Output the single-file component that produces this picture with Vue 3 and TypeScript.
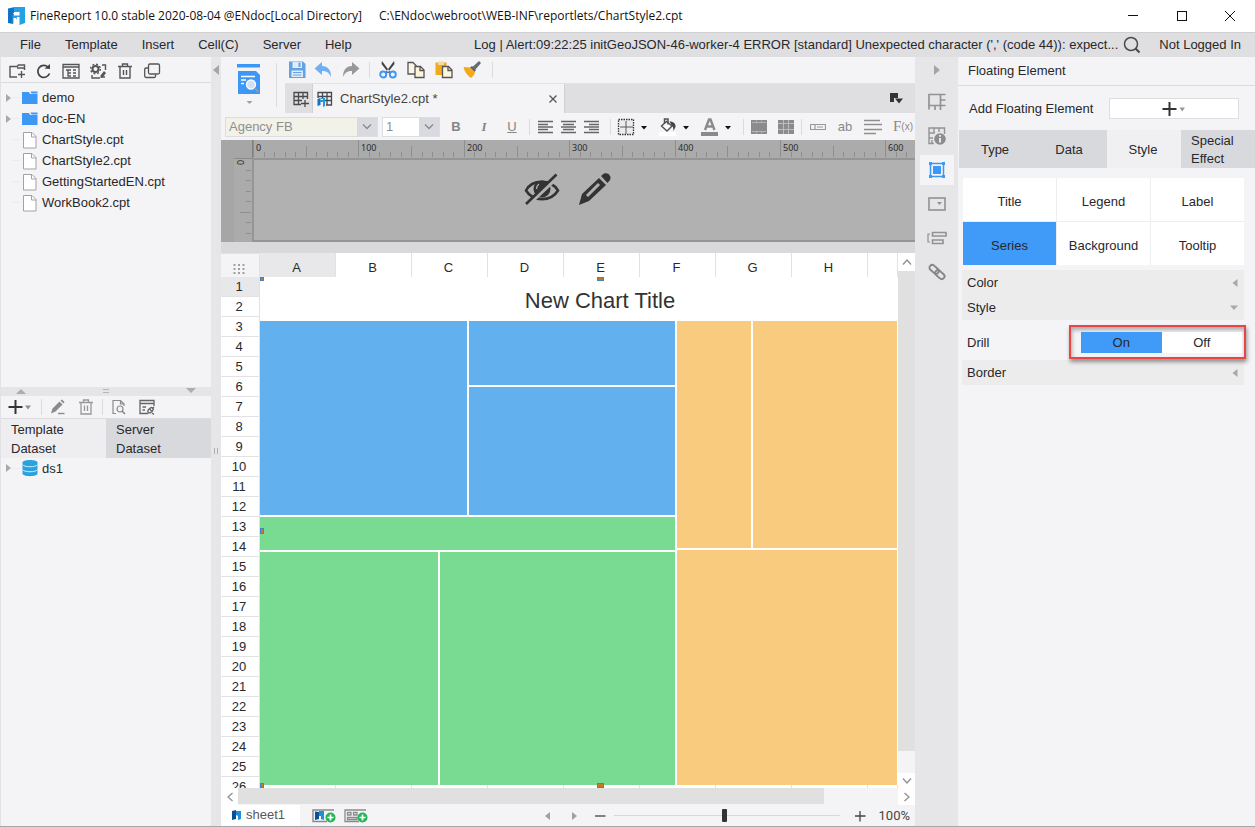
<script setup lang="ts">
import { computed, onBeforeUnmount, onMounted, ref } from 'vue'

const menus: string[] = ['File', 'Template', 'Insert', 'Cell(C)', 'Server', 'Help']

interface TreeEntry {
  name: string
  folder: boolean
}
const files: TreeEntry[] = [
  { name: 'demo', folder: true },
  { name: 'doc-EN', folder: true },
  { name: 'ChartStyle.cpt', folder: false },
  { name: 'ChartStyle2.cpt', folder: false },
  { name: 'GettingStartedEN.cpt', folder: false },
  { name: 'WorkBook2.cpt', folder: false },
]

const columns: string[] = ['A', 'B', 'C', 'D', 'E', 'F', 'G', 'H', '']
const rowCount = 26

const unit = 10.54
interface Tick {
  pos: number
  kind: 'major' | 'half' | 'minor'
  label: string
}

// The ruler only draws the ticks that fit its current width.
const canvas = ref<HTMLElement | null>(null)
const rulerWidth = ref<number>(0)
const measure = (): void => {
  rulerWidth.value = Math.max(0, (canvas.value?.clientWidth ?? 0) - 32)
}
onMounted(() => {
  measure()
  window.addEventListener('resize', measure)
})
onBeforeUnmount(() => window.removeEventListener('resize', measure))

const ticks = computed<Tick[]>(() =>
  Array.from({ length: Math.floor(rulerWidth.value / unit) + 1 }, (_, i) => {
    const pos = Math.round(i * unit)
    return {
      pos,
      kind: i % 10 === 0 ? 'major' : i % 5 === 0 ? 'half' : 'minor',
      label: i % 10 === 0 && pos + 24 < rulerWidth.value ? String(i * 10) : '',
    }
  }),
)
const tickTop = (t: Tick): number => (t.kind === 'major' ? 0 : t.kind === 'half' ? 6 : 12)
const sideTicks: number[] = [1, 2, 3, 4, 5, 6, 7]

const panelTabs: string[] = ['Type', 'Data', 'Style', 'Special Effect']
const panelTab = ref<string>('Style')
const parts: string[] = ['Title', 'Legend', 'Label', 'Series', 'Background', 'Tooltip']
const part = ref<string>('Series')
const drill = ref<'On' | 'Off'>('On')
const zoom = ref<number>(49)
</script>

<template>
  <div class="app">
    <header class="titlebar">
      <svg class="logo" width="18" height="18" viewBox="0 0 18 18" aria-hidden="true">
        <path d="M0 1.500L7 0V6H5V17L0 16Z" fill="#1272c4" />
        <path d="M6 0H17V16L11.500 18V10H9V12L4.500 17.500V8L6 6Z" fill="#22a2e4" />
        <path d="M6 5H11.500V8.500H6Z" fill="#fff" />
        <path d="M5.500 11H8.500V17.500H5.500Z" fill="#fff" />
      </svg>
      <h1>FineReport 10.0 stable 2020-08-04 @ENdoc[Local Directory]</h1>
      <span class="path">C:\ENdoc\webroot\WEB-INF\reportlets/ChartStyle2.cpt</span>
      <div class="window-buttons">
        <button type="button" aria-label="Minimize">
          <svg width="12" height="12" viewBox="0 0 12 12"><path d="M1 5.500H11" stroke="#111" /></svg>
        </button>
        <button type="button" aria-label="Maximize">
          <svg width="12" height="12" viewBox="0 0 12 12"><rect x="1.500" y="1.500" width="9" height="9" fill="none" stroke="#111" /></svg>
        </button>
        <button type="button" aria-label="Close">
          <svg width="12" height="12" viewBox="0 0 12 12"><path d="M1 1L11 11M11 1L1 11" stroke="#111" /></svg>
        </button>
      </div>
    </header>

    <nav class="menubar">
      <button v-for="m in menus" :key="m" type="button" class="menu">{{ m }}</button>
      <span class="log">Log | Alert:09:22:25 initGeoJSON-46-worker-4 ERROR [standard] Unexpected character (',' (code 44)): expect...</span>
      <button type="button" class="search" aria-label="Search">
        <svg width="18" height="18" viewBox="0 0 18 18"><circle cx="8" cy="8" r="6.500" fill="none" stroke="#4a4a4c" stroke-width="1.500" /><path d="M12.500 12.500L16.500 16.500" stroke="#4a4a4c" stroke-width="2.200" /></svg>
      </button>
      <button type="button" class="login">Not Logged In</button>
    </nav>

    <div class="body">
      <aside class="left">
        <div class="bar file-bar">
          <button type="button" aria-label="New folder">
            <svg width="18" height="18" viewBox="0 0 18 18" fill="none" stroke="#555558" stroke-width="1.400"><path d="M9 15H2V4.500H9L10.500 3H16.500V8M9 6H16.500M10 12.500H17M13.500 9V16" /></svg>
          </button>
          <button type="button" aria-label="Refresh">
            <svg width="18" height="18" viewBox="0 0 18 18" fill="none" stroke="#444447" stroke-width="1.700"><path d="M14.500 11.500A6 6 0 1 1 13 5" /><path d="M9.500 6.500L15 7V2Z" fill="#444447" stroke="none" /></svg>
          </button>
          <button type="button" aria-label="Show in folder">
            <svg width="18" height="18" viewBox="0 0 18 18" fill="none" stroke="#555558" stroke-width="1.300"><path d="M1 2.500H17V16H1ZM1 5H17" /><path d="M4 8H9M6 8V14H9M6 11H9M11 8H14M11 11H14M11 14H14" /></svg>
          </button>
          <button type="button" aria-label="Settings">
            <svg width="18" height="18" viewBox="0 0 18 18" fill="none" stroke="#555558"><circle cx="6.500" cy="7" r="3" stroke-width="2" /><circle cx="6.500" cy="7" r="4.800" stroke-width="1.500" stroke-dasharray="1.900 1.870" /><path d="M13 3H16.500V8M3 13V16H11M16 15H12" stroke-width="1.400" /><path d="M15 9L11.500 13.500V16L14 15L17 11Z" fill="#555558" stroke="none" /></svg>
          </button>
          <button type="button" aria-label="Delete file">
            <svg width="18" height="18" viewBox="0 0 18 18" fill="none" stroke="#555558" stroke-width="1.400"><path d="M2 4.500H16M6.500 4.500V2H11.500V4.500M4 5V16H14V5M7.500 8V13M10.500 8V13" /></svg>
          </button>
          <button type="button" aria-label="Copy file">
            <svg width="18" height="18" viewBox="0 0 18 18" fill="none" stroke="#555558" stroke-width="1.300"><rect x="5.500" y="2" width="11" height="10" rx="1.500" /><path d="M5 6H3A1.300 1.300 0 0 0 1.700 7.300V14A1.500 1.500 0 0 0 3.200 15.500H11A1.300 1.300 0 0 0 12.500 14V12.500" /></svg>
          </button>
        </div>
        <ul class="tree files">
          <li v-for="f in files" :key="f.name">
            <svg class="twist" width="6" height="8" viewBox="0 0 6 8" aria-hidden="true"><path v-if="f.folder" d="M0 0L5 4L0 8Z" fill="#a8a8aa" /></svg>
            <span class="stem" aria-hidden="true"></span>
            <svg v-if="f.folder" width="16" height="18" viewBox="0 0 16 18" aria-hidden="true"><path d="M0 3H7L8 5H15.500V15H0Z" fill="#3d97f7" /><path d="M8.500 2.500H15.500V4.500H9.500Z" fill="#3d97f7" /></svg>
            <svg v-else width="16" height="18" viewBox="0 0 16 18" aria-hidden="true"><path d="M1.500 1.500H10L14 5.500V17H1.500Z" fill="#fff" stroke="#a2a2a4" /><path d="M9.500 1.500V6H14" fill="none" stroke="#a2a2a4" /></svg>
            <span>{{ f.name }}</span>
          </li>
        </ul>
        <div class="hsplit" aria-hidden="true">
          <svg width="10" height="6" viewBox="0 0 10 6"><path d="M0 6L5 1L10 6Z" fill="#adadaf" /></svg>
          <svg width="6" height="6" viewBox="0 0 6 6"><path d="M0 1.500H6M0 4.500H6" stroke="#b5b5b7" /></svg>
          <svg width="10" height="6" viewBox="0 0 10 6"><path d="M0 0L5 5L10 0Z" fill="#adadaf" /></svg>
        </div>
        <div class="bar data-bar">
          <button type="button" class="wide" aria-label="Add dataset">
            <svg width="24" height="16" viewBox="0 0 24 16"><path d="M0.500 8H14.500M7.500 1V15" stroke="#333" stroke-width="2" /><path d="M17 6.500H23L20 10.500Z" fill="#8e8e90" /></svg>
          </button>
          <i class="sep"></i>
          <button type="button" aria-label="Edit dataset">
            <svg width="16" height="16" viewBox="0 0 16 16"><path d="M1 14.500L2.500 9.500L9.500 2.500L12.500 5.500L5.500 12.500ZM10.500 1.500L12 0.500L14.500 3L13.500 4.500Z" fill="#8a8a8c" /><path d="M8 14.500H14.500" stroke="#8a8a8c" stroke-width="1.400" /></svg>
          </button>
          <button type="button" aria-label="Delete dataset">
            <svg width="16" height="16" viewBox="0 0 16 16" fill="none" stroke="#98989a" stroke-width="1.300"><path d="M1 3.500H15M5.500 3V1H10.500V3M3 4V15H13V4M6.500 6.500V12M9.500 6.500V12" /></svg>
          </button>
          <i class="sep"></i>
          <button type="button" aria-label="Preview dataset">
            <svg width="16" height="16" viewBox="0 0 16 16" fill="none" stroke="#8a8a8c" stroke-width="1.200"><path d="M5 14.500H2V1.500H9.500L13 5V7M9.500 1.500V5H13" /><circle cx="9" cy="10" r="3" /><path d="M11 12L14 15" stroke-width="1.700" /></svg>
          </button>
          <button type="button" aria-label="Dataset connection">
            <svg width="16" height="16" viewBox="0 0 16 16" fill="none" stroke="#666668" stroke-width="1.300"><path d="M15 7V1.500H1V14.500H8M1 4.500H15M3.500 8H7M3.500 11H6" /><path d="M15 8L13 10M8 15L9.500 13.500" /><rect x="8.500" y="9.500" width="6" height="3.500" rx="1.500" transform="rotate(-45 11.500 11.200)" /><path d="M10 9.500L13.500 13" /><path d="M13 14L15 15.500" /></svg>
          </button>
        </div>
        <div class="data-tabs" role="tablist">
          <button type="button" role="tab" aria-selected="true">Template<br />Dataset</button>
          <button type="button" role="tab" aria-selected="false">Server<br />Dataset</button>
        </div>
        <ul class="tree datasets">
          <li>
            <svg class="twist" width="6" height="8" viewBox="0 0 6 8" aria-hidden="true"><path d="M0 0L5 4L0 8Z" fill="#a8a8aa" /></svg>
            <span class="stem" aria-hidden="true"></span>
            <svg width="16" height="18" viewBox="0 0 16 18" aria-hidden="true"><path d="M0.500 3.500C0.500 0 15.500 0 15.500 3.500V14.500C15.500 18 0.500 18 0.500 14.500Z" fill="#2aa2e0" /><path d="M0.500 5.500C2 8.500 14 8.500 15.500 5.500M0.500 10.500C2 13.500 14 13.500 15.500 10.500" fill="none" stroke="#d8eefa" /></svg>
            <span>ds1</span>
          </li>
        </ul>
      </aside>

      <div class="vsplit" aria-hidden="true">
        <svg width="6" height="10" viewBox="0 0 6 10"><path d="M6 0L0 5L6 10Z" fill="#a5a5a7" /></svg>
        <svg class="grip" width="4" height="6" viewBox="0 0 4 6"><path d="M0.500 0V6M3.500 0V6" stroke="#b0b0b2" /></svg>
      </div>

      <main class="center">
        <div class="top">
          <button type="button" class="preview" aria-label="Preview">
            <svg width="24" height="42" viewBox="0 0 24 42">
              <path d="M0 0H23V3.500H0Z" fill="#3d97f7" />
              <path d="M1 7H19L23 11V30H1Z" fill="#3d97f7" />
              <path d="M4 12.500H18M4 16H9M4 19.500H7" stroke="#fff" stroke-width="1.300" />
              <circle cx="14" cy="20.500" r="4.500" fill="#cfe2f5" stroke="#f8fbff" stroke-width="1.400" />
              <path d="M17.500 24L21.500 28" stroke="#8f9ba8" stroke-width="2.200" />
              <path d="M9.500 37H15.500L12.500 40Z" fill="#a0a0a2" />
            </svg>
          </button>
          <i class="tall-sep"></i>
          <div class="top-right">
            <div class="tools">
              <button type="button" aria-label="Save">
                <svg width="18" height="18" viewBox="0 0 18 18"><path d="M1 0.500H15L17.500 3V17H1Z" fill="#62a1e2" /><path d="M4.500 1H14V7H4.500Z" fill="#dfedfb" /><path d="M10.500 1.500H12.500V6H10.500Z" fill="#62a1e2" /><path d="M3.500 9.500H15V16H3.500Z" fill="#dfedfb" /><path d="M5 11.500H13.500M5 14H13.500" stroke="#62a1e2" /></svg>
              </button>
              <button type="button" aria-label="Undo">
                <svg width="18" height="18" viewBox="0 0 18 18"><path d="M0.500 7.500L8 1V5C14 5 17 9 17 16C15 11.500 12.500 10 8 10V14Z" fill="#6fb0f3" /></svg>
              </button>
              <button type="button" aria-label="Redo">
                <svg width="18" height="18" viewBox="0 0 18 18"><path d="M17.500 7.500L10 1V5C4 5 1 9 1 16C3 11.500 5.500 10 10 10V14Z" fill="#98989a" /></svg>
              </button>
              <i class="sep"></i>
              <button type="button" aria-label="Cut">
                <svg width="18" height="18" viewBox="0 0 18 18"><path d="M3 0L11.500 11.500L10 12.500L2.500 3ZM15 0L6.500 11.500L8 12.500L15.500 3Z" fill="#444447" /><circle cx="4.200" cy="13.500" r="3" fill="none" stroke="#3d97f7" stroke-width="1.900" /><circle cx="13.800" cy="13.500" r="3" fill="none" stroke="#3d97f7" stroke-width="1.900" /></svg>
              </button>
              <button type="button" aria-label="Copy">
                <svg width="18" height="18" viewBox="0 0 18 18" stroke="#555558" stroke-width="1.300"><path d="M1 1.500H6L9 4.500V13H1Z" fill="#fbf6e4" /><path d="M8 5.500H13.500L17 9V16.500H8Z" fill="#fdf6dc" /><path d="M13 5.500V9.500H17" fill="none" /></svg>
              </button>
              <button type="button" aria-label="Paste">
                <svg width="18" height="18" viewBox="0 0 18 18"><path d="M0.500 1.500H11.500V14H0.500Z" fill="#f2aa1a" /><path d="M3 0.500H9V4H3Z" fill="#f4d9a0" /><path d="M7.500 5.500H13.500L17 9V16.500H7.500Z" fill="#fdf6dc" stroke="#555558" stroke-width="1.300" /><path d="M13 5.500V9.500H17" fill="none" stroke="#555558" stroke-width="1.300" /></svg>
              </button>
              <button type="button" aria-label="Format painter">
                <svg width="18" height="18" viewBox="0 0 18 18"><path d="M16 0L18 2L12.500 8.500L9.500 6Z" fill="#666a72" /><path d="M9 5L13 9L11.500 11L7 6.500Z" fill="#5d6068" /><path d="M0.500 6L7 6.500L12 11.500C11 14 10 15.500 8 17C4.500 14.500 1.500 11 0.500 6Z" fill="#f2aa1a" /></svg>
              </button>
              <i class="sep last"></i>
            </div>
            <div class="doc-tabs">
              <button type="button" class="new-tab" aria-label="New template">
                <svg width="16" height="16" viewBox="0 0 16 16" fill="none" stroke="#4a4a4c" stroke-width="1.300"><path d="M8 13.500H1V1.500H14.500V8M1 5.500H14.500M1 9.500H9M5.500 1.500V13.500M10 1.500V8M8 12.500H16M12 9V16" /></svg>
              </button>
              <div class="doc-tab">
                <svg width="16" height="16" viewBox="0 0 16 16" fill="none" stroke="#4a4a4c" stroke-width="1.300"><path d="M1 7V1.500H14.500V14H9M1 5.500H14.500M8 9.500H14.500M5.500 1.500V7M10 1.500V14" /><path d="M0.500 8L3.500 7V14L0.500 15Z" fill="#1272c4" stroke="none" /><path d="M4 7H8V15L6 16V11H3V9H6V8H4Z" fill="#1f9be0" stroke="none" /></svg>
                <span>ChartStyle2.cpt *</span>
                <button type="button" aria-label="Close tab">
                  <svg width="8" height="8" viewBox="0 0 8 8"><path d="M0.500 0.500L7.500 7.500M7.500 0.500L0.500 7.500" stroke="#555" stroke-width="1.300" /></svg>
                </button>
              </div>
              <button type="button" class="tab-list" aria-label="Open templates">
                <svg width="13" height="11" viewBox="0 0 13 11"><path d="M0 0H8V5H4V9H0Z" fill="#333" /><path d="M5 5.500H13L9 10.500Z" fill="#333" /></svg>
              </button>
            </div>
          </div>
        </div>

        <div class="format">
          <label class="pick family">
            <select aria-label="Font family" disabled><option>Agency FB</option></select>
            <svg width="10" height="6" viewBox="0 0 10 6" aria-hidden="true"><path d="M1 0.500L5 4.500L9 0.500" fill="none" stroke="#88888a" stroke-width="1.300" /></svg>
          </label>
          <label class="pick size">
            <select aria-label="Font size" disabled><option>1</option></select>
            <svg width="10" height="6" viewBox="0 0 10 6" aria-hidden="true"><path d="M1 0.500L5 4.500L9 0.500" fill="none" stroke="#88888a" stroke-width="1.300" /></svg>
          </label>
          <button type="button" class="letter bold">B</button>
          <button type="button" class="letter italic">I</button>
          <button type="button" class="letter under">U</button>
          <i class="sep s1"></i>
          <button type="button" class="align" aria-label="Align left"><svg width="16" height="14" viewBox="0 0 16 14"><path d="M0 1.500H15M0 4.500H10M0 7H15M0 9.500H10M0 12.500H15" stroke="#656567" stroke-width="1.700" /></svg></button>
          <button type="button" class="align" aria-label="Align center"><svg width="16" height="14" viewBox="0 0 16 14"><path d="M0 1.500H15M2 4.500H13M0 7H15M2 9.500H13M0 12.500H15" stroke="#656567" stroke-width="1.700" /></svg></button>
          <button type="button" class="align" aria-label="Align right"><svg width="16" height="14" viewBox="0 0 16 14"><path d="M0 1.500H15M5 4.500H15M0 7H15M5 9.500H15M0 12.500H15" stroke="#656567" stroke-width="1.700" /></svg></button>
          <i class="sep s2"></i>
          <button type="button" class="drop" aria-label="Borders">
            <svg width="30" height="18" viewBox="0 0 30 18"><rect x="1.500" y="1.500" width="15" height="15" fill="#ececee" stroke="#333" stroke-width="1.300" stroke-dasharray="1.500 1" /><path d="M9 3V16M3 9H16" stroke="#58585a" /><path d="M24 8H30L27 11.500Z" fill="#111" /></svg>
          </button>
          <button type="button" class="drop" aria-label="Fill color">
            <svg width="30" height="18" viewBox="0 0 30 18"><path d="M0 14H17V18H0Z" fill="#fff" /><path d="M7.500 3.500L13 8L8 13L2.500 8Z" fill="#fafafa" stroke="#505053" stroke-width="1.400" /><path d="M5.500 5.500V1H9V6.500" fill="none" stroke="#505053" stroke-width="1.500" /><path d="M10.500 3.500C15 3.500 17 6 16.500 9L14.500 13C14.500 10 14 8.500 12.500 7Z" fill="#444447" /><path d="M24 8H30L27 11.500Z" fill="#111" /></svg>
          </button>
          <button type="button" class="drop" aria-label="Font color">
            <svg width="30" height="18" viewBox="0 0 30 18"><path d="M0 14H17V18H0Z" fill="#8a8a8c" /><path d="M4 12L8 1.500H9.500L13.500 12M5.500 8.500H12" fill="none" stroke="#8a8a8c" stroke-width="2.400" /><path d="M24 8H30L27 11.500Z" fill="#111" /></svg>
          </button>
          <i class="sep s3"></i>
          <button type="button" class="cell" aria-label="Merge cells">
            <svg width="16" height="14" viewBox="0 0 16 14"><path d="M0 0H16V14H0Z" fill="#8b8b8d" /><path d="M5.500 0.500V2.500M10.500 0.500V2.500M5.500 11.500V13.500M10.500 11.500V13.500M1 2.500H15M1 11.500H15" stroke="#b4b4b6" /></svg>
          </button>
          <button type="button" class="cell" aria-label="Unmerge cells">
            <svg width="16" height="14" viewBox="0 0 16 14"><path d="M0 0H16V14H0Z" fill="#8b8b8d" /><path d="M5.500 0V14M10.500 0V14M0 3.500H16M0 9.500H16" stroke="#bcbcbe" /></svg>
          </button>
          <i class="sep s4"></i>
          <button type="button" class="cell" aria-label="Widget"><svg width="16" height="14" viewBox="0 0 16 14"><path d="M0.500 4.500H15.500V9.500H0.500ZM5 4.500V9.500M7 7H13" fill="none" stroke="#98989a" stroke-width="1.200" /></svg></button>
          <button type="button" class="cell ab">ab</button>
          <button type="button" class="cell" aria-label="Rich text"><svg width="18" height="16" viewBox="0 0 18 16"><path d="M0 1.500H16M0 5.500H18M0 10.500H18M0 14.500H12" stroke="#8e8e90" stroke-width="1.500" /></svg></button>
          <button type="button" class="cell fx">F<small>(x)</small></button>
        </div>

        <section ref="canvas" class="canvas-top">
          <svg class="ruler-x" height="19" aria-hidden="true">
            <g v-for="t in ticks" :key="t.pos">
              <line :x1="t.pos + 0.5" :x2="t.pos + 0.5" :y1="tickTop(t)" y2="17" />
              <text v-if="t.label" :x="t.pos + 3" y="11">{{ t.label }}</text>
            </g>
          </svg>
          <svg class="ruler-y" width="18" height="84" aria-hidden="true">
            <text transform="translate(2 8) rotate(-90)" x="2" y="8">0</text>
            <line v-for="n in sideTicks" :key="n" :x1="n === 5 ? 6 : 12" x2="17" :y1="Math.round(n * 10.5) + 0.5" :y2="Math.round(n * 10.5) + 0.5" />
          </svg>
          <div class="banner">
            <button type="button" aria-label="Hide">
              <svg width="36" height="34" viewBox="0 0 36 34"><path d="M2 18.500C8 7 27 7 34 18.500C27 30 9 30 2 18.500Z" fill="none" stroke="#333" stroke-width="2.600" /><circle cx="18" cy="17" r="8.500" fill="#333" /><path d="M12.500 17A6 6 0 0 1 15 12" fill="none" stroke="#b1b1b1" stroke-width="1.300" /><path d="M3 33L34 4" stroke="#b1b1b1" stroke-width="5" /><path d="M2 32L32.500 2.500" stroke="#333" stroke-width="2.600" /></svg>
            </button>
            <button type="button" aria-label="Edit">
              <svg width="34" height="34" viewBox="0 0 34 34"><path d="M1 33L4 22L21 6L28 13L11 29Z" fill="#333" /><path d="M9 24L21 12" stroke="#b1b1b1" stroke-width="3" /><path d="M23 4L26 1.500C30 0 34 4 32 8L29.500 11Z" fill="#333" /></svg>
            </button>
          </div>
        </section>

        <section class="sheet-area">
          <div class="sheet">
            <table>
              <colgroup><col class="c-head" /><col v-for="(c, i) in columns" :key="i" :class="{ c: i < 8 }" /></colgroup>
              <thead>
                <tr>
                  <td class="corner"><svg width="12" height="10" viewBox="0 0 12 10" aria-hidden="true"><path d="M1.500 0V10M6 0V10M10.500 0V10" stroke="#a0a0a2" stroke-width="2" stroke-dasharray="2 2" /></svg></td>
                  <th v-for="(c, i) in columns" :key="i" scope="col" :class="{ current: i === 0 }">{{ c }}</th>
                </tr>
              </thead>
              <tbody>
                <tr v-for="r in rowCount" :key="r">
                  <th scope="row" :class="{ current: r === 1 }">{{ r }}</th>
                  <td v-for="(c, i) in columns" :key="i"></td>
                </tr>
              </tbody>
            </table>
            <figure class="chart">
              <figcaption>New Chart Title</figcaption>
              <div class="treemap">
                <div class="col main">
                  <div class="row r1">
                    <div class="tile blue"></div>
                    <div class="col">
                      <div class="tile blue small"></div>
                      <div class="tile blue large"></div>
                    </div>
                  </div>
                  <div class="tile green band"></div>
                  <div class="row r3">
                    <div class="tile green g1"></div>
                    <div class="tile green g2"></div>
                  </div>
                </div>
                <div class="col side">
                  <div class="row o1">
                    <div class="tile orange a"></div>
                    <div class="tile orange b"></div>
                  </div>
                  <div class="tile orange o2"></div>
                </div>
              </div>
              <i class="handle tl"></i><i class="handle tc"></i><i class="handle ml"></i><i class="handle bl"></i><i class="handle bc"></i>
            </figure>
          </div>
          <div class="vscroll" aria-hidden="true">
            <span class="arrow"><svg width="10" height="6" viewBox="0 0 10 6"><path d="M1 5.500L5 1L9 5.500" /></svg></span>
            <span class="thumb"></span>
            <span class="arrow end"><svg width="10" height="6" viewBox="0 0 10 6"><path d="M1 0.500L5 5L9 0.500" /></svg></span>
          </div>
        </section>
        <div class="hscroll" aria-hidden="true">
          <span class="arrow"><svg width="6" height="10" viewBox="0 0 6 10"><path d="M5.500 1L1 5L5.500 9" /></svg></span>
          <span class="thumb"></span>
          <span class="arrow end"><svg width="6" height="10" viewBox="0 0 6 10"><path d="M0.500 1L5 5L0.500 9" /></svg></span>
        </div>

        <footer class="sheet-tabs">
          <button type="button" class="sheet-tab">
            <svg width="9" height="10" viewBox="0 0 9 10" aria-hidden="true"><path d="M0 1L4 0V9L0 10Z" fill="#0d4f94" /><path d="M4 1H9V9L6 10V6L4 5Z" fill="#1f8fd6" /></svg>
            sheet1
          </button>
          <button type="button" class="add" aria-label="Add sheet">
            <svg width="24" height="14" viewBox="0 0 24 14"><path d="M22 1H1V12.500H15" fill="none" stroke="#8a8a8c" stroke-width="1.400" /><path d="M3 2.500L7 3V10L3 11Z" fill="#0d4f94" /><path d="M7 2H12V11L9 10V7H7Z" fill="#1f8fd6" /><circle cx="18.500" cy="8.500" r="5" fill="#22b455" /><path d="M15.500 8.500H21.500M18.500 5.500V11.500" stroke="#fff" stroke-width="1.700" /></svg>
          </button>
          <button type="button" class="add" aria-label="Add form">
            <svg width="24" height="14" viewBox="0 0 24 14"><path d="M22 1H1V12.500H15M3.500 3.500H7V6H3.500ZM9.500 3.500H13V6H9.500ZM3.500 8.500H13V10.500H3.500Z" fill="none" stroke="#8a8a8c" stroke-width="1.300" /><circle cx="18.500" cy="8.500" r="5" fill="#22b455" /><path d="M15.500 8.500H21.500M18.500 5.500V11.500" stroke="#fff" stroke-width="1.700" /></svg>
          </button>
          <div class="zoom">
            <button type="button" class="tri" aria-label="Previous sheet"><svg width="5" height="8" viewBox="0 0 5 8"><path d="M5 0L0 4L5 8Z" fill="#a0a0a2" /></svg></button>
            <button type="button" class="tri" aria-label="Next sheet"><svg width="5" height="8" viewBox="0 0 5 8"><path d="M0 0L5 4L0 8Z" fill="#a0a0a2" /></svg></button>
            <button type="button" aria-label="Zoom out"><svg width="12" height="12" viewBox="0 0 12 12"><path d="M1 6H11.500" stroke="#444" stroke-width="1.300" /></svg></button>
            <input v-model.number="zoom" type="range" min="0" max="100" aria-label="Zoom" />
            <button type="button" aria-label="Zoom in"><svg width="12" height="12" viewBox="0 0 12 12"><path d="M1 6H11.500M6 1V11.500" stroke="#444" stroke-width="1.300" /></svg></button>
            <span class="percent">100%</span>
          </div>
        </footer>
      </main>

      <nav class="strip">
        <button type="button" aria-label="Collapse"><svg width="6" height="10" viewBox="0 0 6 10"><path d="M0 0L6 5L0 10Z" fill="#a5a5a7" /></svg></button>
        <button type="button" aria-label="Cell element"><svg width="18" height="18" viewBox="0 0 18 18" fill="none" stroke="#929294" stroke-width="1.700"><path d="M1 16.500V1.500H17.500M1 12.500H17.500M12.500 1.500V17M7 12.500V17M12.500 7H17.500" /></svg></button>
        <button type="button" aria-label="Cell attribute"><svg width="18" height="18" viewBox="0 0 18 18" fill="none" stroke="#929294" stroke-width="1.400"><path d="M6 16.500H1V1H16.500V7M1 6H7M1 11H5M6 1V6M11 1V5M4 16V13" /><circle cx="12" cy="12" r="5.800" fill="#8c8c8e" stroke="none" /><path d="M12 8V9.800M12 11V15.500" stroke="#f0f0f0" stroke-width="1.800" /></svg></button>
        <button type="button" class="on" aria-label="Floating element"><svg width="18" height="18" viewBox="0 0 18 18"><path d="M1 2.500H17M1 15.500H17M2.500 1V17M15.500 1V17" stroke="#3d97f7" stroke-width="1.500" /><path d="M5 5H13V13H5Z" fill="#3d97f7" /><path d="M1 1H4V4H1ZM14 1H17V4H14ZM1 14H4V17H1ZM14 14H17V17H14Z" fill="#3d97f7" /></svg></button>
        <button type="button" aria-label="Widget settings"><svg width="18" height="18" viewBox="0 0 18 18"><rect x="1" y="3" width="16" height="12" fill="none" stroke="#929294" stroke-width="1.600" /><path d="M9 7H14L11.500 10Z" fill="#929294" /></svg></button>
        <button type="button" aria-label="Condition attribute"><svg width="20" height="18" viewBox="0 0 20 18" fill="none" stroke="#929294" stroke-width="1.600"><path d="M5.500 3.500H19V7H5.500ZM5.500 11H16V14.500H5.500Z" /><path d="M3 5H1V13H3" stroke-width="1.200" /></svg></button>
        <button type="button" aria-label="Hyperlink"><svg width="18" height="18" viewBox="0 0 18 18" fill="none" stroke="#858588" stroke-width="1.900"><rect x="1" y="3.500" width="10.500" height="5.500" rx="2.700" transform="rotate(42 6 6.200)" /><rect x="6.500" y="9" width="10.500" height="5.500" rx="2.700" transform="rotate(42 12 11.800)" /></svg></button>
      </nav>

      <aside class="right">
        <h2>Floating Element</h2>
        <div class="add-row">
          <span>Add Floating Element</span>
          <button type="button" aria-label="Add Floating Element"><svg width="24" height="14" viewBox="0 0 24 14"><path d="M0.500 7H14.500M7.500 0V14" stroke="#333" stroke-width="2" /><path d="M17.500 5.500H23L20.200 9.500Z" fill="#98989a" /></svg></button>
        </div>
        <div class="panel-tabs" role="tablist">
          <button v-for="t in panelTabs" :key="t" type="button" role="tab" :aria-selected="panelTab === t" @click="panelTab = t"><span>{{ t }}</span></button>
        </div>
        <div class="parts">
          <button v-for="p in parts" :key="p" type="button" :class="{ active: part === p }" @click="part = p">{{ p }}</button>
        </div>
        <div class="sections">
          <button type="button" class="fold">Color<svg width="6" height="8" viewBox="0 0 6 8" aria-hidden="true"><path d="M5.500 0L0.500 4L5.500 8Z" fill="#a8a8aa" /></svg></button>
          <button type="button" class="fold">Style<svg width="8" height="6" viewBox="0 0 8 6" aria-hidden="true"><path d="M0 0.500H8L4 5Z" fill="#a8a8aa" /></svg></button>
          <div class="drill" role="radiogroup" aria-labelledby="drill-label">
            <span id="drill-label">Drill</span>
            <div class="highlight">
              <label :class="{ active: drill === 'On' }"><input v-model="drill" type="radio" name="drill" value="On" />On</label>
              <label :class="{ active: drill === 'Off' }"><input v-model="drill" type="radio" name="drill" value="Off" />Off</label>
            </div>
          </div>
          <button type="button" class="fold">Border<svg width="6" height="8" viewBox="0 0 6 8" aria-hidden="true"><path d="M5.500 0L0.500 4L5.500 8Z" fill="#a8a8aa" /></svg></button>
        </div>
      </aside>
    </div>
  </div>
</template>

<style>
body {
  margin: 0;
}
</style>

<style scoped>
.app {
  display: flex;
  flex-direction: column;
  height: 100vh;
  box-sizing: border-box;
  overflow: hidden;
  border-bottom: 1px solid #a8a8aa;
  background: #f4f4f6;
  color: #28282c;
  font: 13px/19px "Liberation Sans", Arial, sans-serif;
}
button {
  display: flex;
  align-items: center;
  justify-content: center;
  flex: none;
  margin: 0;
  padding: 0;
  border: 0;
  background: none;
  color: inherit;
  font: inherit;
}
svg {
  display: block;
  flex: none;
}

.titlebar {
  display: flex;
  align-items: center;
  height: 32px;
  flex: none;
  padding-left: 8px;
  background: #fff;
  color: #111;
  font: 12px/16px "Open Sans", "Noto Sans", sans-serif;
}
.titlebar h1 {
  margin: 0 17px 0 4px;
  font: inherit;
  white-space: nowrap;
}
.path {
  white-space: nowrap;
}
.window-buttons {
  display: flex;
  margin-left: auto;
}
.window-buttons button {
  width: 49px;
  height: 32px;
}
.window-buttons button:last-child {
  padding-right: 2px;
}

.menubar {
  display: flex;
  align-items: center;
  height: 25px;
  flex: none;
  box-sizing: border-box;
  border-top: 1px solid #cfcfd1;
  padding: 0 14px 1px 8px;
  background: #dfdfe1;
}
.menu {
  padding: 0 12px;
}
.log {
  flex: 1;
  min-width: 0;
  overflow: hidden;
  text-align: right;
  white-space: nowrap;
}
.search {
  margin: 0 18px 0 5px;
}

.body {
  display: flex;
  flex: 1;
  min-height: 0;
}
.left {
  display: flex;
  flex-direction: column;
  width: 211px;
  flex: none;
  box-sizing: border-box;
  border-left: 1px solid #e2e2e4;
}
.bar {
  display: flex;
  align-items: center;
  flex: none;
  box-sizing: border-box;
  border-bottom: 1px solid #dcdcde;
}
.file-bar {
  height: 26px;
  padding: 3px 0 0 2px;
}
.file-bar button {
  width: 27px;
}
.tree {
  margin: 0;
  padding: 0;
  list-style: none;
}
.tree li {
  display: flex;
  align-items: center;
  height: 21px;
}
.twist {
  margin-left: 5px;
}
.stem {
  width: 8px;
  height: 1px;
  margin-right: 2px;
  background: #ececee;
}
.tree li > span:last-child {
  margin-left: 4px;
}
.files {
  flex: 300;
  min-height: 0;
  box-sizing: border-box;
  padding-top: 4px;
}
.datasets {
  flex: 369;
  min-height: 0;
}
.hsplit {
  display: flex;
  align-items: center;
  justify-content: space-between;
  height: 9px;
  flex: none;
  padding: 0 15px;
  background: #e5e5e7;
}
.data-bar {
  height: 23px;
}
.data-bar .wide {
  width: 38px;
}
.data-bar button {
  width: 28px;
}
.sep {
  width: 1px;
  height: 16px;
  flex: none;
  background: #dbdbdd;
}
.data-bar .sep {
  margin: 0 2px;
}
.data-tabs {
  display: flex;
  flex: none;
}
.data-tabs button {
  flex: 1;
  justify-content: flex-start;
  padding: 1px 10px 0;
  background: #d8d9dd;
  text-align: left;
}
.data-tabs button[aria-selected="true"] {
  background: #eeeef0;
}

.vsplit {
  display: flex;
  flex-direction: column;
  align-items: center;
  width: 10px;
  flex: none;
  box-sizing: border-box;
  padding-top: 8px;
  background: #e6e6e8;
}
.grip {
  margin: auto 0;
}

.center {
  display: flex;
  flex-direction: column;
  flex: 1;
  min-width: 0;
  box-sizing: border-box;
}
.top {
  display: flex;
  height: 56px;
  flex: none;
}
.preview {
  width: 55px;
}
.tall-sep {
  width: 1px;
  margin: 6px 8px 6px 0;
  flex: none;
  background: #dbdbdd;
}
.top-right {
  flex: 1;
  min-width: 0;
}
.tools {
  display: flex;
  align-items: center;
  height: 26px;
}
.tools button {
  width: 28px;
}
.tools button:first-child {
  width: 24px;
}
.tools .sep {
  margin: 0 4px;
}
.tools .last {
  margin-left: 6px;
}
.doc-tabs {
  display: flex;
  height: 29px;
  border-top: 1px solid #e2e2e4;
  background: #dfdfe1;
}
.new-tab {
  width: 28px;
  padding-left: 4px;
  box-sizing: border-box;
  border-right: 1px solid #d0d0d2;
}
.doc-tab {
  display: flex;
  align-items: center;
  width: 252px;
  box-sizing: border-box;
  padding: 0 7px 0 4px;
  border-right: 1px solid #d0d0d2;
  background: #f4f4f6;
  color: #444;
}
.doc-tab span {
  margin: 0 auto 0 7px;
}
.tab-list {
  margin: 0 12px 0 auto;
}

.format {
  display: flex;
  align-items: center;
  height: 27px;
  flex: none;
  box-sizing: border-box;
  padding-left: 4px;
  overflow: hidden;
}
.pick {
  display: flex;
  align-items: center;
  justify-content: flex-end;
  position: relative;
  height: 20px;
  box-sizing: border-box;
  flex: none;
  border: 1px solid #dcdde1;
  background: #d9dadf;
}
.pick svg {
  margin: 0 5px;
}
.pick select {
  flex: 1;
  min-width: 0;
  height: 18px;
  margin: 0;
  padding: 0 3px;
  appearance: none;
  border: 0;
  border-radius: 0;
  background: #fff;
  color: #8f8f91;
  opacity: 1;
  font: 13px/18px "Liberation Sans", Arial, sans-serif;
}
.family {
  width: 153px;
  margin-right: 4px;
}
.family select {
  background: #f2f2e8;
}
.size {
  width: 58px;
  margin-right: 2px;
}
.letter {
  width: 28px;
  color: #858587;
}
.bold {
  font-weight: 700;
}
.italic {
  font: italic 700 13px/19px "Liberation Serif", serif;
}
.under {
  text-decoration: underline;
}
.align {
  width: 23px;
}
.s1 {
  margin: 0 4px 0 3px;
}
.s2 {
  margin: 0 6px 0 7px;
}
.drop {
  margin-right: 12px;
}
.s3 {
  margin: 0 7px 0 0;
}
.cell {
  margin-right: 11px;
  color: #88888a;
}
.s4 {
  margin: 0 8px 0 -4px;
}
.ab {
  width: 16px;
}
.fx {
  margin: 0;
  font: 15px/19px "Liberation Serif", serif;
}
.fx small {
  font: 10px/19px "Liberation Sans", Arial, sans-serif;
}

.canvas-top {
  display: grid;
  grid-template-columns: 31px minmax(0, 1fr);
  grid-template-rows: 18px 84px;
  flex: none;
  overflow: hidden;
  background: #a6a6a6;
}
.ruler-x {
  grid-column: 2;
  width: 100%;
  border-left: 1px solid #808080;
  box-sizing: border-box;
  background: #ababab;
}
.ruler-y {
  grid-column: 1;
  justify-self: end;
  background: #ababab;
  border-top: 1px solid #8c8c8c;
  box-sizing: border-box;
}
.canvas-top line {
  stroke: #8e8e8e;
}
.canvas-top text {
  fill: #2c2c2c;
  font: 9px "Noto Sans", sans-serif;
}
.banner {
  display: flex;
  justify-content: center;
  gap: 18px;
  box-sizing: border-box;
  padding: 12px 34px 0 0;
  border: 2px solid #959595;
  border-right: 0;
  background: #b1b1b1;
}
.banner button {
  height: 34px;
}

.sheet-area {
  display: flex;
  flex: 1;
  min-height: 0;
  border-top: 11px solid #d9d9db;
}
.sheet {
  position: relative;
  flex: 1;
  min-width: 0;
  overflow: hidden;
  background: #fff;
}
table {
  width: 100%;
  border-collapse: separate;
  border-spacing: 0;
  table-layout: fixed;
}
.c-head {
  width: 39px;
}
.c {
  width: 76px;
}
th,
td {
  box-sizing: border-box;
  height: 20px;
  padding: 0;
  border: solid #e2e2e4;
  border-width: 0 1px 1px 0;
  font-weight: 400;
  line-height: 19px;
  text-align: center;
}
thead th,
thead td {
  height: 24px;
  padding: 4px 2px 0 0;
  border-bottom: 0;
}
tbody th {
  padding: 0 2px 0 0;
  line-height: 18px;
}
.current {
  background: #e8e8ea;
}
.corner {
  background: #f4f4f6;
  border-top: 1px solid #e2e2e4;
}
.corner svg {
  margin: 2px auto 0;
}
.chart {
  position: absolute;
  display: flex;
  flex-direction: column;
  inset: 24px 0 3px 39px;
  margin: 0;
  background: #fff;
}
.chart figcaption {
  height: 44px;
  padding-left: 42px;
  box-sizing: border-box;
  flex: none;
  color: #333;
  font-size: 22px;
  line-height: 48px;
  text-align: center;
}
.treemap {
  display: flex;
  gap: 2px;
  flex: 1;
  min-height: 0;
  padding-right: 1px;
}
.col,
.row {
  display: flex;
  gap: 2px;
  flex: 1 1 0;
  min-width: 0;
  min-height: 0;
}
.col {
  flex-direction: column;
}
.tile {
  flex: 1 1 0;
}
.blue {
  background: #62b0ed;
}
.green {
  background: #78db91;
}
.orange {
  background: #f8cb7f;
}
.main {
  flex-grow: 416;
}
.side {
  flex-grow: 220;
}
.r1 {
  flex-grow: 194;
}
.band {
  flex-grow: 33;
}
.r3 {
  flex-grow: 233;
}
.small {
  flex-grow: 64;
}
.large {
  flex-grow: 128;
}
.g1 {
  flex-grow: 178;
}
.g2 {
  flex-grow: 236;
}
.o1 {
  flex-grow: 227;
}
.o2 {
  flex-grow: 236;
}
.a {
  flex-grow: 74;
}
.b {
  flex-grow: 145;
}
.handle {
  position: absolute;
  width: 4px;
  height: 4px;
  box-sizing: border-box;
  border: 1px solid #3f86c8;
  background: #c8791e;
}
.tl {
  top: 0;
  left: 0;
}
.tc {
  top: 0;
  left: 337px;
  width: 7px;
}
.ml {
  top: 251px;
  left: 0;
  height: 6px;
}
.bl {
  bottom: -3px;
  left: 0;
  height: 5px;
}
.bc {
  bottom: -3px;
  left: 337px;
  width: 7px;
  height: 5px;
}

.vscroll {
  display: flex;
  flex-direction: column;
  width: 17px;
  flex: none;
}
.arrow {
  display: flex;
  align-items: center;
  justify-content: center;
  width: 17px;
  height: 18px;
  flex: none;
  background: #fff;
}
.arrow path {
  fill: none;
  stroke: #909092;
  stroke-width: 1.3px;
}
.thumb {
  background: #e0e0e0;
}
.vscroll .thumb {
  flex: 1;
}
.vscroll .end {
  height: 15px;
  margin-top: 22px;
}
.hscroll {
  display: flex;
  height: 17px;
  flex: none;
}
.hscroll .arrow {
  height: 17px;
}
.hscroll .thumb {
  flex: 1;
  height: 16px;
}
.hscroll .end {
  margin-left: 74px;
}

.sheet-tabs {
  display: flex;
  height: 21px;
  flex: none;
}
.sheet-tab {
  width: 79px;
  gap: 5px;
  padding: 0 4px 2px 0;
  box-sizing: border-box;
  background: #fff;
  color: #58585a;
}
.add {
  margin: 0 -4px 0 12px;
}
.zoom {
  display: flex;
  align-items: center;
  flex: 1;
  max-width: 370px;
  min-width: 0;
  margin-left: auto;
  color: #444;
}
.zoom .tri {
  margin-right: 22px;
}
.zoom .tri + .tri {
  margin-right: 17px;
}
.zoom input {
  flex: 1;
  min-width: 0;
  height: 14px;
  margin: 0 14px 0 8px;
  appearance: none;
  background: linear-gradient(#d8d8da, #d8d8da) center / 100% 1px no-repeat;
}
.zoom input::-webkit-slider-thumb {
  appearance: none;
  width: 5px;
  height: 13px;
  border-radius: 1px;
  background: #333;
}
.percent {
  margin: 0 5px 0 13px;
  font: 13px/19px Roboto, "Open Sans", sans-serif;
}

.strip {
  display: flex;
  flex-direction: column;
  align-items: center;
  width: 43px;
  flex: none;
  background: #e6e6e8;
}
.strip button {
  width: 34px;
  height: 30px;
  margin-bottom: 4px;
}
.strip button:first-child {
  height: 26px;
}
.strip .on {
  background: #f4f4f6;
}

.right {
  width: 297px;
  flex: none;
  box-sizing: border-box;
}
.right h2 {
  height: 29px;
  margin: 0;
  padding-left: 10px;
  box-sizing: border-box;
  border-bottom: 1px solid #dcdcde;
  font: inherit;
  line-height: 28px;
}
.add-row {
  display: flex;
  align-items: center;
  justify-content: space-between;
  height: 44px;
  padding: 1px 16px 0 11px;
  box-sizing: border-box;
}
.add-row button {
  width: 130px;
  height: 21px;
  box-sizing: border-box;
  border: 1px solid #dedee0;
  background: #fff;
}
.panel-tabs {
  display: grid;
  grid-template-columns: repeat(4, 1fr);
  height: 38px;
  margin-left: 1px;
}
.panel-tabs button {
  padding: 2px 2px 0 0;
  background: #d8d9dd;
  line-height: 18px;
}
.panel-tabs button span {
  max-width: 52px;
  text-align: left;
}
.panel-tabs button[aria-selected="true"] {
  background: #f0f0f2;
}
.parts {
  display: grid;
  grid-template-columns: repeat(3, 1fr);
  gap: 1px;
  margin: 10px 11px 5px 5px;
  background: #eeeef0;
}
.parts button {
  height: 43px;
  padding-top: 4px;
  background: #fff;
}
.parts .active {
  background: #3f9af8;
}
.sections {
  margin: 0 11px 0 4px;
}
.fold {
  justify-content: space-between;
  width: 100%;
  height: 25px;
  padding: 0 6px 0 5px;
  background: #ececec;
}
.drill {
  display: flex;
  align-items: center;
  justify-content: space-between;
  height: 40px;
  padding: 4px 0 0 5px;
  box-sizing: border-box;
}
.highlight {
  display: flex;
  position: relative;
  width: 177px;
  height: 34px;
  margin-right: -2px;
  padding: 5px 2px 4px 10px;
  box-sizing: border-box;
  border: 2px solid #ea4444;
  box-shadow: 1px 3px 4px rgba(0, 0, 0, 0.4), inset 1px 3px 4px rgba(0, 0, 0, 0.3);
}
.highlight label {
  flex: 1;
  height: 21px;
  background: #fff;
  line-height: 22px;
  text-align: center;
}
.highlight label.active {
  background: #3f9af8;
}
.highlight input {
  position: absolute;
  width: 1px;
  height: 1px;
  margin: 0;
  opacity: 0;
}
</style>
